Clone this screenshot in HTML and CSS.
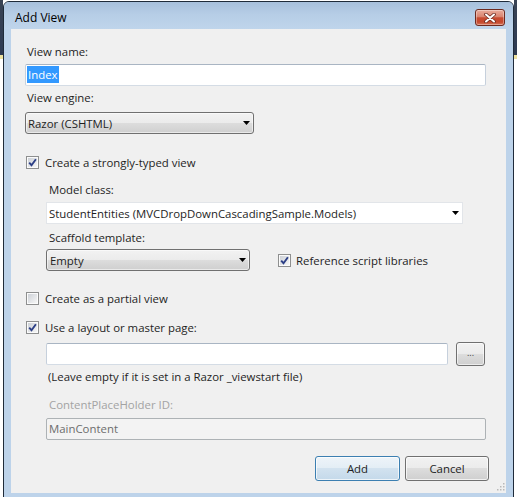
FILE: index.html
```html
<!DOCTYPE html>
<html lang="en">
<head>
    <meta charset="UTF-8">
    <title>Add View</title>
    <link rel="stylesheet" href="styles.css">
</head>
<body>
    <div class="desk">
        <div class="edge"></div>
        <div class="window">
            <div class="titlebar">
                <span class="title">Add View</span>
                <button class="close" aria-label="Close">
                    <svg width="12" height="10" viewBox="0 0 12 10">
                        <path d="M2 1.5 L10 8.5 M10 1.5 L2 8.5" stroke="#6b2a20" stroke-width="3.6" stroke-linecap="round"/>
                        <path d="M2 1.5 L10 8.5 M10 1.5 L2 8.5" stroke="#fff" stroke-width="2" stroke-linecap="round"/>
                    </svg>
                </button>
            </div>
            <div class="client">
                <div class="label">View name:</div>
                <div class="textbox"><span class="sel">Index</span></div>

                <div class="label gap-s">View engine:</div>
                <div class="dropdown engine">
                    <span>Razor (CSHTML)</span>
                    <svg class="arrow" width="7" height="4" viewBox="0 0 7 4"><path d="M0 0 H7 L3.5 4 Z" fill="#000"/></svg>
                </div>

                <label class="check strongly">
                    <span class="box"><svg width="9" height="9" viewBox="0 0 9 9"><path d="M1.2 4.6 L3.5 7.2 L7.9 1.2" fill="none" stroke="#2c3f86" stroke-width="1.9"/></svg></span>
                    Create a strongly-typed view
                </label>

                <div class="indent">
                    <div class="label model">Model class:</div>
                    <div class="combo">
                        <span>StudentEntities (MVCDropDownCascadingSample.Models)</span>
                        <svg class="arrow" width="7" height="4" viewBox="0 0 7 4"><path d="M0 0 H7 L3.5 4 Z" fill="#000"/></svg>
                    </div>
                    <div class="label scaffold-label">Scaffold template:</div>
                    <div class="row scaffold-row">
                        <div class="dropdown scaffold">
                            <span>Empty</span>
                            <svg class="arrow" width="7" height="4" viewBox="0 0 7 4"><path d="M0 0 H7 L3.5 4 Z" fill="#000"/></svg>
                        </div>
                        <label class="check scripts">
                            <span class="box"><svg width="9" height="9" viewBox="0 0 9 9"><path d="M1.2 4.6 L3.5 7.2 L7.9 1.2" fill="none" stroke="#2c3f86" stroke-width="1.9"/></svg></span>
                            Reference script libraries
                        </label>
                    </div>
                </div>

                <label class="check partial">
                    <span class="box"></span>
                    Create as a partial view
                </label>
                <label class="check layout">
                    <span class="box"><svg width="9" height="9" viewBox="0 0 9 9"><path d="M1.2 4.6 L3.5 7.2 L7.9 1.2" fill="none" stroke="#2c3f86" stroke-width="1.9"/></svg></span>
                    Use a layout or master page:
                </label>

                <div class="indent">
                    <div class="row path-row">
                        <div class="textbox path"></div>
                        <button class="browse">...</button>
                    </div>
                    <div class="note">(Leave empty if it is set in a Razor _viewstart file)</div>
                    <div class="label disabled">ContentPlaceHolder ID:</div>
                    <div class="textbox off">MainContent</div>
                </div>

                <div class="actions">
                    <button class="btn default">Add</button>
                    <button class="btn cancel">Cancel</button>
                </div>

                <!-- resize grip in the lower right corner -->
                <svg class="grip" width="9" height="9" viewBox="0 0 9 9">
                    <g fill="#b9b9b9">
                        <rect x="7" y="1" width="1.5" height="1.5"/>
                        <rect x="4" y="4" width="1.5" height="1.5"/>
                        <rect x="7" y="4" width="1.5" height="1.5"/>
                        <rect x="1" y="7" width="1.5" height="1.5"/>
                        <rect x="4" y="7" width="1.5" height="1.5"/>
                        <rect x="7" y="7" width="1.5" height="1.5"/>
                    </g>
                </svg>
            </div>
        </div>
        <div class="edge"></div>
    </div>
</body>
</html>
```

FILE: styles.css
```css
body {
    margin: 0;
    width: 517px;
    height: 497px;
    overflow: hidden;
    background: #fff;
    font-family: "Open Sans", "Noto Sans", sans-serif;
    font-size: 11.4px;
    color: #1e1e1e;
}
.desk {
    display: flex;
    height: 497px;
}
.edge {
    width: 3px;
    flex: none;
    background: linear-gradient(#3a4455 0, #2d3a52 55px, #eee2a0 55px, #eee2a0 59px, #fff 59px);
}
.window {
    width: 511px;
    height: 510px;
    flex: none;
    margin-top: 1px;
    box-sizing: border-box;
    border: 1px solid #1f2b3a;
    border-radius: 6px 6px 0 0;
    background: #bdd3ea;
}
.titlebar {
    height: 27px;
    display: flex;
    justify-content: space-between;
    align-items: flex-start;
    padding: 0 8px 0 11px;
    border-radius: 5px 5px 0 0;
    background: linear-gradient(#a7c0dc, #b6cde6 45%, #bfd5eb);
}
.title {
    margin-top: 8px;
    line-height: 16px;
    font-size: 12px;
    color: #000;
}
.close {
    margin-top: 7px;
    width: 30px;
    height: 17px;
    padding: 0;
    display: flex;
    align-items: center;
    justify-content: center;
    border: 1px solid #6e2a1f;
    border-radius: 3px;
    background: linear-gradient(#e9ab9b, #d98470 45%, #c74b31 52%, #c5482d 80%, #d7765a);
    box-shadow: inset 0 0 0 1px rgba(255, 255, 255, 0.35);
}
.client {
    position: relative;
    margin: 0 7px;
    height: 464px;
    box-sizing: border-box;
    padding: 15px 20px 0 14px;
    background: #f0f0f0;
}
.label {
    line-height: 16px;
    padding-left: 2px;
}
.gap-s { margin-top: 4px; }
.textbox {
    height: 22px;
    box-sizing: border-box;
    margin-top: 4px;
    padding: 1px;
    border: 1px solid;
    border-color: #a9b5c3 #c6d0dc #d4dce5 #c6d0dc;
    border-radius: 2px;
    background: #fff;
    line-height: 17px;
}
.sel {
    display: inline-block;
    padding: 0 1px;
    background: #3399ff;
    color: #fff;
}
.dropdown {
    height: 22px;
    box-sizing: border-box;
    display: flex;
    align-items: center;
    justify-content: space-between;
    padding: 0 3px 0 2px;
    border: 1px solid #707070;
    border-radius: 3px;
    background: linear-gradient(#f2f2f2, #ebebeb 50%, #dddddd 50%, #cfcfcf);
    box-shadow: inset 0 0 0 1px rgba(255, 255, 255, 0.55);
}
.engine {
    width: 229px;
    margin-top: 6px;
}
.check {
    display: flex;
    align-items: center;
    height: 16px;
    gap: 6px;
    padding-left: 1px;
}
.box {
    width: 13px;
    height: 13px;
    flex: none;
    box-sizing: border-box;
    padding: 1px;
    border: 1px solid #8e8f8f;
    background: linear-gradient(135deg, #cdd1d7, #f6f6f6) content-box, #fbfbfb;
    display: flex;
    align-items: center;
    justify-content: center;
}
.strongly { margin-top: 20px; }
.indent { margin-left: 21px; }
.indent .label { padding-left: 3px; }
.model { margin-top: 12px; }
.combo {
    width: 417px;
    height: 22px;
    box-sizing: border-box;
    margin-top: 4px;
    display: flex;
    align-items: center;
    justify-content: space-between;
    padding: 0 3px 0 2px;
    border: 1px solid #e2e5e9;
    background: #fff;
}
.scaffold-label { margin-top: 6px; }
.row {
    display: flex;
    align-items: center;
}
.scaffold-row { margin-top: 3px; }
.scaffold {
    width: 204px;
    padding-left: 3px;
}
.scripts {
    margin-left: 27px;
    gap: 5px;
}
.partial { margin-top: 19px; }
.layout { margin-top: 13px; }
.path-row {
    margin-top: 7px;
    height: 24px;
    gap: 8px;
}
.path {
    width: 402px;
    margin-top: 0;
}
.browse {
    width: 29px;
    height: 24px;
    padding: 0 0 4px;
    border: 1px solid #707070;
    border-radius: 3px;
    background: linear-gradient(#f2f2f2, #ebebeb 50%, #dddddd 50%, #cfcfcf);
    box-shadow: inset 0 0 0 1px rgba(255, 255, 255, 0.6);
    font-family: inherit;
    font-size: 9px;
    color: #444;
}
.note {
    margin-top: 3px;
    line-height: 16px;
    padding-left: 2px;
}
.disabled {
    margin-top: 12px;
    color: #a3a3a3;
}
.off {
    margin-top: 5px;
    padding-left: 2px;
    border-color: #adb2b5;
    background: #f3f3f3;
    color: #6d6d6d;
}
.actions {
    display: flex;
    justify-content: flex-end;
    gap: 5px;
    margin: 16px -3px 0 0;
}
.btn {
    width: 85px;
    height: 25px;
    padding: 0;
    border: 1px solid #707070;
    border-radius: 3px;
    background: linear-gradient(#f2f2f2, #ebebeb 50%, #dddddd 50%, #cfcfcf);
    box-shadow: inset 0 0 0 1px rgba(255, 255, 255, 0.7);
    font-family: inherit;
    font-size: 11.4px;
    color: #1e1e1e;
}
.btn.default {
    border-color: #3c7fb1;
    background: linear-gradient(#eef4f9, #e3edf5 50%, #d2e2ef 50%, #c4d9ea);
}
.btn.cancel { width: 84px; }
.grip {
    position: absolute;
    right: 1px;
    bottom: 2px;
}
```
